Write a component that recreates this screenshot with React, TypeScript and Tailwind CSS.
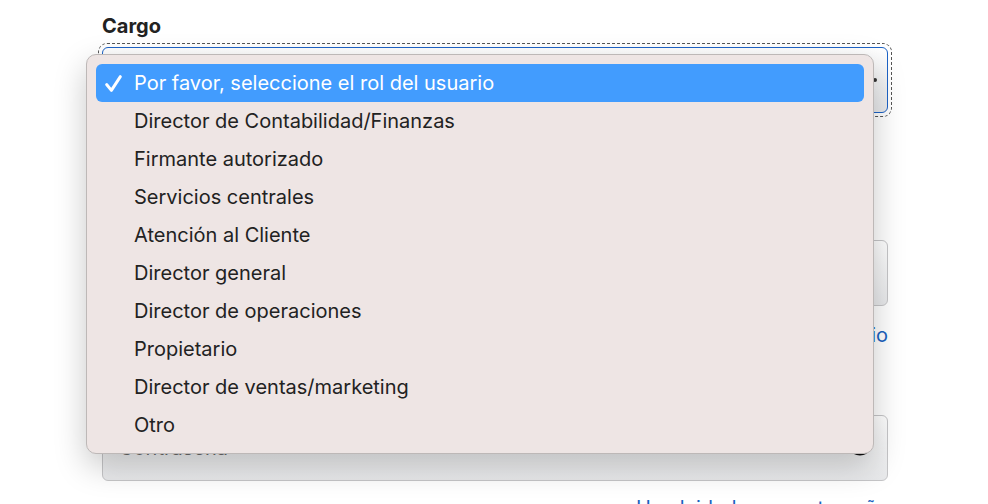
import { Eye } from "lucide-react";

const roles = [
  "Por favor, seleccione el rol del usuario",
  "Director de Contabilidad/Finanzas",
  "Firmante autorizado",
  "Servicios centrales",
  "Atención al Cliente",
  "Director general",
  "Director de operaciones",
  "Propietario",
  "Director de ventas/marketing",
  "Otro",
];

function Check() {
  return (
    <svg width="19" height="19" viewBox="0 0 18 18" fill="none">
      <path d="M2.5 10 L7 15.5 L15.5 2.5" stroke="white" strokeWidth="2.8" strokeLinecap="round" strokeLinejoin="round" />
    </svg>
  );
}

export default function App() {
  return (
    <main className="relative w-[988px] h-[504px] overflow-hidden bg-white font-['Inter',sans-serif] text-[#1d1d1f]">
      <section className="ml-[102px] w-[786px] pt-[15px]">
        <label className="block text-[20px] font-bold leading-[22px] text-[#222]">Cargo</label>

        {/* select with focus ring */}
        <section className="mt-[10px] relative">
          <div className="absolute -inset-[4px] rounded-[9px] border border-dashed border-[#555]" />
          <div className="h-[66px] rounded-[6px] border border-[#1d63c6] bg-gradient-to-b from-white to-[#e8e9eb] flex items-center justify-end pr-[10px]">
            <span className="block w-[4px] h-[4px] rounded-full bg-[#333]" />
          </div>
        </section>

        <section className="mt-[92px]">
          <label className="block text-[20px] font-bold leading-[22px] text-[#222]">Usuario</label>
          <div className="mt-[13px] h-[66px] rounded-[6px] border border-[#c6c6c8] bg-gradient-to-b from-white to-[#e8e9eb]" />
          <p className="mt-[18px] text-right text-[20px] leading-[22px] text-[#1a62c0]">¿Olvidó su nombre de usuario</p>
        </section>

        <section className="mt-[34px]">
          <label className="block text-[20px] font-bold leading-[22px] text-[#222]">Contraseña</label>
          <div className="mt-[13px] h-[66px] rounded-[6px] border border-[#c6c6c8] bg-gradient-to-b from-white to-[#e8e9eb] flex items-center justify-between px-[16px]">
            <span className="text-[20px] text-[#6b6b6b]">Contraseña</span>
            <Eye size={22} strokeWidth={2.4} className="text-[#111]" />
          </div>
          <p className="mt-[16px] text-right text-[20px] leading-[22px] text-[#1a62c0]">¿Ha olvidado su contraseña</p>
        </section>
      </section>

      {/* native select popup */}
      <div className="absolute left-[86px] top-[54px] w-[788px] rounded-[10px] border border-[#bdb8b7] bg-[#eee5e4] py-[9px] shadow-[0_12px_32px_rgba(0,0,0,0.22)]">
        {roles.map((r, i) => (
          <div
            key={r}
            className={
              i === 0
                ? "mx-[9px] h-[38px] rounded-[6px] bg-[#429cfe] flex items-center text-white"
                : "mx-[9px] h-[38px] flex items-center text-[#222]"
            }
          >
            <span className="w-[38px] pl-[8px] flex items-center">{i === 0 && <Check />}</span>
            <span className="text-[20px] leading-[22px]">{r}</span>
          </div>
        ))}
      </div>
    </main>
  );
}
